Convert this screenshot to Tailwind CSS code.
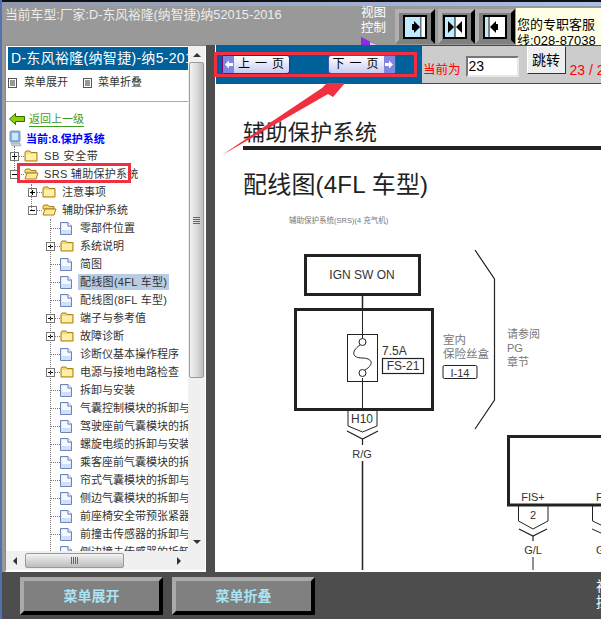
<!DOCTYPE html>
<html lang="zh-CN">
<head>
    <meta charset="UTF-8">
    <title>视图控制</title>
    <script src="https://cdn.jsdelivr.net/npm/@tailwindcss/browser@4"></script>
</head>
<body class="bg-[#999999]">

<svg width="0" height="0" class="absolute">
    <defs>
        <symbol id="folder" viewBox="0 0 14 12">
            <path d="M1 2.5 L2 1 H6 L7 2.5 H13 V11 H1 Z" fill="#fcd967" stroke="#a87f22"/>
            <path d="M2 4 H12 V10 H2 Z" fill="#fff0a8"/>
        </symbol>
        <symbol id="folder-open" viewBox="0 0 15 12">
            <path d="M1 2.5 L2 1 H6 L7 2.5 H12 V5 H1 Z" fill="#fcd967" stroke="#a87f22"/>
            <path d="M1 11 L3 5 H14 L12 11 Z" fill="#ffeb99" stroke="#a87f22"/>
        </symbol>
        <symbol id="doc" viewBox="0 0 12 13">
            <path d="M0.5 0.5 H8 L11.5 4 V12.5 H0.5 Z" fill="#cfe0fa" stroke="#6f83b8"/>
            <path d="M8 0.5 V4 H11.5" fill="#fff" stroke="#6f83b8"/>
            <path d="M1.5 1.5 H7 V5 H10.5 V8 H1.5 Z" fill="#f4f8ff"/>
        </symbol>
        <symbol id="plus" viewBox="0 0 9 9">
            <rect x="0.5" y="0.5" width="8" height="8" fill="#fff" stroke="#777"/>
            <path d="M2 4.5 H7 M4.5 2 V7" stroke="#000"/>
        </symbol>
        <symbol id="minus" viewBox="0 0 9 9">
            <rect x="0.5" y="0.5" width="8" height="8" fill="#fff" stroke="#777"/>
            <path d="M2 4.5 H7" stroke="#000"/>
        </symbol>
        <symbol id="menu-ico" viewBox="0 0 9 10">
            <rect x="0.5" y="0.5" width="8" height="9" fill="#fff" stroke="#555"/>
            <path d="M2 3 H7 M2 5 H7 M2 7 H7" stroke="#333"/>
        </symbol>
    </defs>
</svg>

<div class="relative w-[601px] h-[619px] overflow-hidden flex flex-col border-l-2 border-[#5570b0] text-[#333] [font-family:'Liberation_Sans','Noto_Sans_CJK_SC',sans-serif]">

    <!-- top strip -->
    <div class="h-[2px] bg-[#111] -ml-[2px] shrink-0"></div>
    <div class="h-[4px] bg-gradient-to-r from-[#8f97ad] to-[#a9c0ea] -ml-[2px] shrink-0"></div>

    <!-- header -->
    <header class="h-[39px] flex shrink-0 [&>*]:shrink-0">
        <div class="w-[359px] pl-[3px] text-[12.8px] leading-[18px] text-[#ececec] whitespace-nowrap">当前车型:厂家:D-东风裕隆(纳智捷)纳52015-2016</div>
        <div class="w-[34px] relative text-[12.5px] leading-[15px] text-white">
            <div class="w-[30px]">视图<br>控制</div>
            <svg class="absolute left-0 bottom-0" width="18" height="8" viewBox="0 0 18 8"><polygon points="0,0 16,8 0,8" fill="#8a2be2"/><polygon points="9,5 16,8 9,8" fill="#e6c8f5"/></svg>
        </div>
        <div class="flex h-[35px] mt-[3px] [&>*]:shrink-0">
            <button class="w-[40px] h-[35px] bg-[#808080] border-[4px] border-t-[#b0b0b0] border-l-[#b0b0b0] border-r-black border-b-[#808080] flex items-center pl-[4px]">
                <svg width="24" height="24" viewBox="0 0 24 24"><rect x="1" y="1" width="22" height="22" fill="#bfeaff" stroke="#000" stroke-width="2"/><path d="M18 2 V22" stroke="#000"/><rect x="18.5" y="2" width="3.5" height="20" fill="#fff"/><polygon points="11,6 17,12 11,18" fill="#000"/><rect x="9" y="9" width="3" height="6"/></svg>
            </button>
            <button class="w-[37px] h-[35px] bg-[#808080] border-[4px] border-t-[#b0b0b0] border-l-[#b0b0b0] border-r-black border-b-[#808080] flex items-center pl-[1px] ml-[3px]">
                <svg width="24" height="24" viewBox="0 0 24 24"><rect x="1" y="1" width="22" height="22" fill="#fff" stroke="#000" stroke-width="2"/><rect x="2" y="2" width="10" height="20" fill="#bfeaff"/><path d="M12 2 V22" stroke="#000"/><polygon points="5,6 11,12 5,18"/><polygon points="19,6 13,12 19,18"/></svg>
            </button>
            <button class="w-[40px] h-[35px] bg-[#808080] border-[4px] border-t-[#b0b0b0] border-l-[#b0b0b0] border-r-black border-b-[#808080] flex items-center pl-[4px]">
                <svg width="24" height="24" viewBox="0 0 24 24"><rect x="1" y="1" width="22" height="22" fill="#fff" stroke="#000" stroke-width="2"/><rect x="2" y="2" width="3" height="20" fill="#bfeaff"/><path d="M6 2 V22" stroke="#000"/><polygon points="13,6 7,12 13,18"/><rect x="12" y="9" width="3" height="6"/></svg>
            </button>
        </div>
        <div class="mt-[2px] ml-[1px] w-[90px] h-[37px] overflow-hidden bg-[#ffffe8] text-black text-[13px] leading-[16px] pt-[9px] pl-[1px] whitespace-nowrap">您的专职客服<br>线:028-87038</div>
    </header>

    <!-- main -->
    <main class="h-[527px] flex shrink-0">
        <!-- left tree panel -->
        <aside class="ml-[3px] w-[201px] shrink-0 bg-white border-t border-l border-[#8a8a8a] flex flex-col border-b-2 border-b-white">
            <div class="h-[505px] flex overflow-hidden shrink-0">
                <div class="w-[182px] overflow-hidden shrink-0">
                    <div class="ml-[2px] mt-[1px] h-[23px] bg-[#00609a] text-white text-[14px] leading-[23px] tracking-[0.3px] pl-[3px] whitespace-nowrap overflow-hidden">D-东风裕隆(纳智捷)-纳5-2015-2016</div>
                    <div class="h-[25px] mb-[6px] flex items-center pl-[2px] text-[11px]">
                        <svg width="9" height="10"><use href="#menu-ico"/></svg>
                        <span class="ml-[7px]">菜单展开</span>
                        <svg width="9" height="10" class="ml-[15px]"><use href="#menu-ico"/></svg>
                        <span class="ml-[6px]">菜单折叠</span>
                    </div>
                    <div class="h-px bg-[#aaaaaa]"></div>

                    <div class="h-[16px] mt-[9px] flex items-center pl-[3px] text-[11px]">
                        <svg width="16" height="12" viewBox="0 0 16 12"><polygon points="0.5,6 6.5,0.5 6.5,3.5 15.5,3.5 15.5,8.5 6.5,8.5 6.5,11.5" fill="#8fd000" stroke="#2d6a00"/></svg>
                        <span class="ml-[4px] text-[#3f9a1e] border-b border-[#3f9a1e] leading-[14px]">返回上一级</span>
                    </div>
                    <div class="h-[20px] mt-[2px] flex items-center pl-[3px] text-[11px]">
                        <svg width="13" height="18" viewBox="0 0 13 18"><rect x="1" y="1" width="10" height="11" rx="1" fill="#7fb2ea" stroke="#8a97a8"/><rect x="3" y="3" width="6" height="7" fill="#cfe6ff"/><path d="M2 13 H11 L12 16 H3 Z" fill="#c9ced6" stroke="#8a97a8" stroke-width="0.5"/></svg>
                        <span class="ml-[4px] font-bold text-[#0000ff]">当前:8.保护系统</span>
                    </div>

                    <!-- tree -->
                    <div class="relative -mt-[2px] text-[11px] whitespace-nowrap leading-[18px] [&>div>*]:shrink-0">
                        <div class="absolute left-[8px] -top-[1px] h-[24px] border-l border-dotted border-[#777]"></div>
                        <div class="absolute left-[25px] top-[37px] h-[26px] border-l border-dotted border-[#777]"></div>
                        <div class="absolute left-[44px] top-[72px] h-[360px] border-l border-dotted border-[#777]"></div>

                        <div class="h-[18px] flex items-center pl-[4px]"><svg width="9" height="9"><use href="#plus"/></svg><span class="w-[5px] border-t border-dotted border-[#777]"></span><svg width="14" height="12"><use href="#folder"/></svg><span class="ml-[6px] tracking-[0.6px]">SB 安全带</span></div>
                        <div class="h-[18px] flex items-center pl-[4px]"><svg width="9" height="9"><use href="#minus"/></svg><span class="w-[5px] border-t border-dotted border-[#777]"></span><svg width="15" height="12"><use href="#folder-open"/></svg><span class="ml-[5px] tracking-[0.3px]">SRS 辅助保护系统</span></div>
                        <div class="h-[18px] flex items-center pl-[22px]"><svg width="9" height="9"><use href="#plus"/></svg><span class="w-[5px] border-t border-dotted border-[#777]"></span><svg width="14" height="12"><use href="#folder"/></svg><span class="ml-[6px]">注意事项</span></div>
                        <div class="h-[18px] flex items-center pl-[22px]"><svg width="9" height="9"><use href="#minus"/></svg><span class="w-[5px] border-t border-dotted border-[#777]"></span><svg width="15" height="12"><use href="#folder-open"/></svg><span class="ml-[5px]">辅助保护系统</span></div>

                        <div class="h-[18px] flex items-center pl-[44px]"><span class="w-[10px] border-t border-dotted border-[#777]"></span><svg width="12" height="13"><use href="#doc"/></svg><span class="ml-[8px]">零部件位置</span></div>
                        <div class="h-[18px] flex items-center pl-[40px]"><svg width="9" height="9"><use href="#plus"/></svg><span class="w-[5px] border-t border-dotted border-[#777]"></span><svg width="14" height="12"><use href="#folder"/></svg><span class="ml-[6px]">系统说明</span></div>
                        <div class="h-[18px] flex items-center pl-[44px]"><span class="w-[10px] border-t border-dotted border-[#777]"></span><svg width="12" height="13"><use href="#doc"/></svg><span class="ml-[8px]">简图</span></div>
                        <div class="h-[18px] flex items-center pl-[44px]"><span class="w-[10px] border-t border-dotted border-[#777]"></span><svg width="12" height="13"><use href="#doc"/></svg><span class="ml-[6px] px-[2px] bg-[#b8cce4] leading-[16px] tracking-[0.3px]">配线图(4FL 车型)</span></div>
                        <div class="h-[18px] flex items-center pl-[44px]"><span class="w-[10px] border-t border-dotted border-[#777]"></span><svg width="12" height="13"><use href="#doc"/></svg><span class="ml-[8px] tracking-[0.3px]">配线图(8FL 车型)</span></div>
                        <div class="h-[18px] flex items-center pl-[40px]"><svg width="9" height="9"><use href="#plus"/></svg><span class="w-[5px] border-t border-dotted border-[#777]"></span><svg width="14" height="12"><use href="#folder"/></svg><span class="ml-[6px]">端子与参考值</span></div>
                        <div class="h-[18px] flex items-center pl-[40px]"><svg width="9" height="9"><use href="#plus"/></svg><span class="w-[5px] border-t border-dotted border-[#777]"></span><svg width="14" height="12"><use href="#folder"/></svg><span class="ml-[6px]">故障诊断</span></div>
                        <div class="h-[18px] flex items-center pl-[44px]"><span class="w-[10px] border-t border-dotted border-[#777]"></span><svg width="12" height="13"><use href="#doc"/></svg><span class="ml-[8px]">诊断仪基本操作程序</span></div>
                        <div class="h-[18px] flex items-center pl-[40px]"><svg width="9" height="9"><use href="#plus"/></svg><span class="w-[5px] border-t border-dotted border-[#777]"></span><svg width="14" height="12"><use href="#folder"/></svg><span class="ml-[6px]">电源与接地电路检查</span></div>
                        <div class="h-[18px] flex items-center pl-[44px]"><span class="w-[10px] border-t border-dotted border-[#777]"></span><svg width="12" height="13"><use href="#doc"/></svg><span class="ml-[8px]">拆卸与安装</span></div>
                        <div class="h-[18px] flex items-center pl-[44px]"><span class="w-[10px] border-t border-dotted border-[#777]"></span><svg width="12" height="13"><use href="#doc"/></svg><span class="ml-[8px]">气囊控制模块的拆卸与安装</span></div>
                        <div class="h-[18px] flex items-center pl-[44px]"><span class="w-[10px] border-t border-dotted border-[#777]"></span><svg width="12" height="13"><use href="#doc"/></svg><span class="ml-[8px]">驾驶座前气囊模块的拆卸与安装</span></div>
                        <div class="h-[18px] flex items-center pl-[44px]"><span class="w-[10px] border-t border-dotted border-[#777]"></span><svg width="12" height="13"><use href="#doc"/></svg><span class="ml-[8px]">螺旋电缆的拆卸与安装</span></div>
                        <div class="h-[18px] flex items-center pl-[44px]"><span class="w-[10px] border-t border-dotted border-[#777]"></span><svg width="12" height="13"><use href="#doc"/></svg><span class="ml-[8px]">乘客座前气囊模块的拆卸与安装</span></div>
                        <div class="h-[18px] flex items-center pl-[44px]"><span class="w-[10px] border-t border-dotted border-[#777]"></span><svg width="12" height="13"><use href="#doc"/></svg><span class="ml-[8px]">帘式气囊模块的拆卸与安装</span></div>
                        <div class="h-[18px] flex items-center pl-[44px]"><span class="w-[10px] border-t border-dotted border-[#777]"></span><svg width="12" height="13"><use href="#doc"/></svg><span class="ml-[8px]">侧边气囊模块的拆卸与安装</span></div>
                        <div class="h-[18px] flex items-center pl-[44px]"><span class="w-[10px] border-t border-dotted border-[#777]"></span><svg width="12" height="13"><use href="#doc"/></svg><span class="ml-[8px]">前座椅安全带预张紧器的拆卸</span></div>
                        <div class="h-[18px] flex items-center pl-[44px]"><span class="w-[10px] border-t border-dotted border-[#777]"></span><svg width="12" height="13"><use href="#doc"/></svg><span class="ml-[8px]">前撞击传感器的拆卸与安装</span></div>
                        <div class="h-[18px] flex items-center pl-[44px]"><span class="w-[10px] border-t border-dotted border-[#777]"></span><svg width="12" height="13"><use href="#doc"/></svg><span class="ml-[8px]">侧边撞击传感器的拆卸与安装</span></div>
                    </div>
                </div>

                <!-- vertical scrollbar -->
                <div class="w-[17px] shrink-0 bg-[#f0f0f0] flex flex-col items-center relative">
                    <div class="mt-[7px] w-0 h-0 border-x-[4px] border-x-transparent border-b-[4px] border-b-[#333]"></div>
                    <div class="mt-[5px] w-[15px] h-[316px] bg-gradient-to-r from-[#f3f3f3] via-[#dcdcdc] to-[#bdbdbd] border border-[#9a9a9a] rounded-[2px] flex flex-col items-center justify-center gap-[1px]">
                        <div class="w-[7px] h-px bg-[#666]"></div>
                        <div class="w-[7px] h-px bg-[#666]"></div>
                        <div class="w-[7px] h-px bg-[#666]"></div>
                        <div class="w-[7px] h-px bg-[#666]"></div>
                    </div>
                    <div class="mt-auto mb-[7px] w-0 h-0 border-x-[4px] border-x-transparent border-t-[4px] border-t-[#333]"></div>
                </div>
            </div>

            <!-- horizontal scrollbar -->
            <div class="h-[19px] shrink-0 bg-[#f0f0f0] flex items-center pl-[7px] w-[199px] [&>*]:shrink-0">
                <div class="w-0 h-0 border-y-[4px] border-y-transparent border-r-[4px] border-r-[#333]"></div>
                <div class="ml-[8px] w-[99px] h-[15px] bg-gradient-to-b from-[#f3f3f3] to-[#bdbdbd] border border-[#9a9a9a] rounded-[2px] flex items-center justify-center gap-[1px]">
                    <div class="w-px h-[7px] bg-[#666]"></div>
                    <div class="w-px h-[7px] bg-[#666]"></div>
                    <div class="w-px h-[7px] bg-[#666]"></div>
                    <div class="w-px h-[7px] bg-[#666]"></div>
                </div>
                <div class="ml-[53px] w-0 h-0 border-y-[4px] border-y-transparent border-l-[4px] border-l-[#333]"></div>
            </div>
        </aside>

        <div class="w-[9px] bg-[#4d4d4d] shrink-0"></div>

        <!-- right panel -->
        <section class="w-[386px] shrink-0 bg-white flex flex-col border-l border-white">
            <div class="h-[39px] flex shrink-0 bg-[#00609a] pt-[1px] pb-px">
                <div class="w-[206px] flex shrink-0 pt-[9px] pl-[6px]">
                    <button class="relative shrink-0 w-[68px] h-[19px] rounded-[3px] border border-[#800080] bg-gradient-to-b from-white to-[#c9cdf0] text-black text-[12px] leading-[17px] pl-[15px] tracking-[5px] whitespace-nowrap">
                        <svg class="absolute left-0 top-0" width="11" height="17" viewBox="0 0 11 17"><rect width="11" height="17" fill="#7f86e0"/><polygon points="2,8.5 6,4.5 6,7 10,7 10,10 6,10 6,12.5" fill="#fff"/></svg>上一页
                    </button>
                    <button class="relative shrink-0 ml-[38px] w-[68px] h-[19px] rounded-[3px] border border-[#3a55c0] bg-gradient-to-b from-white to-[#c9cdf0] text-black text-[12px] leading-[17px] pr-[8px] tracking-[5px] whitespace-nowrap">
                        下一页<svg class="absolute right-0 top-0" width="11" height="17" viewBox="0 0 11 17"><rect width="11" height="17" fill="#7f86e0"/><polygon points="9,8.5 5,4.5 5,7 1,7 1,10 5,10 5,12.5" fill="#fff"/></svg>
                    </button>
                </div>
                <div class="flex-1 bg-[#cccccc] relative flex whitespace-nowrap overflow-hidden [&>*]:shrink-0">
                    <span class="mt-[15px] ml-[1px] text-[#ff0000] text-[12.5px] leading-[18px]">当前为</span>
                    <input value="23" class="mt-[10px] ml-[5px] w-[53px] h-[21px] bg-white border-2 border-t-[#777] border-l-[#777] border-r-[#e8e8e8] border-b-[#e8e8e8] text-black text-[14px] px-[1px] outline-none">
                    <button class="ml-[8px] w-[39px] h-[28px] bg-[#efefef] border border-t-[#fff] border-l-[#fff] border-r-[#333] border-b-[#333] text-black text-[14px]">跳转</button>
                    <span class="mt-[15px] ml-[4px] text-[#ff0000] text-[14px] leading-[18px]">23 / 2</span>
                </div>
            </div>

            <div class="flex-1 overflow-hidden text-[#222]">
                <div class="pl-[27px] mt-[36px]">
                    <div class="text-[22px] leading-[26px] tracking-[0.4px] h-[26px] whitespace-nowrap">辅助保护系统</div>
                    <div class="h-[4px] bg-[#222]"></div>
                    <div class="mt-[21px] text-[24px] leading-[28px] tracking-[0.2px] whitespace-nowrap">配线图(4FL 车型)</div>
                </div>
                <svg class="block mt-[11px]" width="385" height="360" viewBox="216 210 385 360" fill="none" stroke="#222" font-family="Liberation Sans, Noto Sans CJK SC, sans-serif">
                    <g stroke="none" fill="#777">
                        <text x="289" y="223" font-size="7.5">辅助保护系统(SRS)(4 充气机)</text>
                        <text x="443" y="344" font-size="11.5">室内</text>
                        <text x="443" y="358" font-size="11.5">保险丝盒</text>
                        <text x="507" y="338" font-size="11">请参阅</text>
                        <text x="507" y="352" font-size="11">PG</text>
                        <text x="507" y="366" font-size="11">章节</text>
                    </g>
                    <rect x="305.5" y="255.5" width="114" height="39" stroke-width="3"/>
                    <path d="M362.5 295 V309" stroke-width="1.5"/>
                    <rect x="295.5" y="309.5" width="137" height="100" stroke-width="3"/>
                    <path d="M362.5 309 V338 M362.5 378 V410" stroke-width="1"/>
                    <rect x="347.5" y="334.5" width="30" height="47" stroke-width="1"/>
                    <circle cx="362.5" cy="342" r="3.5" stroke-width="1"/>
                    <circle cx="362.5" cy="373" r="3.5" stroke-width="1"/>
                    <path d="M360 345 C350 352 353 358 362 358 C372 358 375 364 365 370" stroke-width="1"/>
                    <rect x="382.5" y="358.5" width="41" height="15" stroke-width="1.2"/>
                    <rect x="443" y="365.5" width="34" height="13" rx="1.5" stroke-width="1"/>
                    <path d="M475 250 L494.5 279 V400 L475 429" stroke-width="1.2"/>
                    <path d="M348 410 V426 L362.5 432 L377 426 V410" stroke-width="1"/>
                    <path d="M347 431 L362.5 439 L378 431 M362.5 439 V445" stroke-width="1.2"/>
                    <path d="M362.5 461 V570" stroke-width="1.5"/>
                    <path d="M601 436.5 H508.5 V505 H601" stroke-width="3"/>
                    <path d="M518.5 506 V521 L533 529 L548 521 V506" stroke-width="1"/>
                    <path d="M519 529 L533 536 L547 529 M533 536 V541" stroke-width="1.2"/>
                    <path d="M533 557 V570" stroke-width="1"/>
                    <path d="M592.5 506 V521 L601 525 M592 529 L601 533" stroke-width="1"/>
                    <g stroke="none" fill="#333">
                        <text x="362" y="279" font-size="12" text-anchor="middle">IGN SW ON</text>
                        <text x="382" y="355" font-size="12">7.5A</text>
                        <text x="403" y="370" font-size="12" text-anchor="middle">FS-21</text>
                        <text x="460" y="377" font-size="11" text-anchor="middle">I-14</text>
                        <text x="362" y="423" font-size="12" text-anchor="middle">H10</text>
                        <text x="362" y="458" font-size="11" text-anchor="middle">R/G</text>
                        <text x="533" y="501" font-size="11" text-anchor="middle">FIS+</text>
                        <text x="596" y="501" font-size="11">F</text>
                        <text x="533" y="519" font-size="11" text-anchor="middle">2</text>
                        <text x="533" y="554" font-size="11" text-anchor="middle">G/L</text>
                        <text x="596" y="554" font-size="11">G</text>
                    </g>
                </svg>
            </div>
            <div class="h-[2px] bg-white shrink-0"></div>
        </section>
    </main>

    <!-- bottom bar -->
    <footer class="h-[47px] bg-[#4d4d4d] flex shrink-0 relative [&>*]:shrink-0">
        <button class="ml-[18px] mt-[5px] w-[143px] h-[38px] bg-[#808080] border-[4px] border-t-[#aaaaaa] border-l-[#aaaaaa] border-r-black border-b-black text-[#a8e4f4] text-[14px] font-bold">菜单展开</button>
        <button class="ml-[9px] mt-[5px] w-[143px] h-[38px] bg-[#808080] border-[4px] border-t-[#aaaaaa] border-l-[#aaaaaa] border-r-black border-b-black text-[#a8e4f4] text-[14px] font-bold">菜单折叠</button>
        <div class="ml-[281px] mt-[6px] w-[30px] text-white text-[14px] leading-[16px]">视图<br>控制</div>
    </footer>

    <!-- annotations drawn on top of the screenshot -->
    <div class="absolute left-[212px] top-[52px] w-[203px] h-[25px] border-[3px] border-[#f03040]"></div>
    <div class="absolute left-[15px] top-[163px] w-[114px] h-[20px] border-[3px] border-[#f03040]"></div>
    <svg class="absolute left-0 top-0" width="601" height="619" viewBox="2 0 601 619">
        <polygon points="222,155 322,88 327,83 345,83 333,97 328,94" fill="#f03040"/>
    </svg>
</div>

</body>
</html>
